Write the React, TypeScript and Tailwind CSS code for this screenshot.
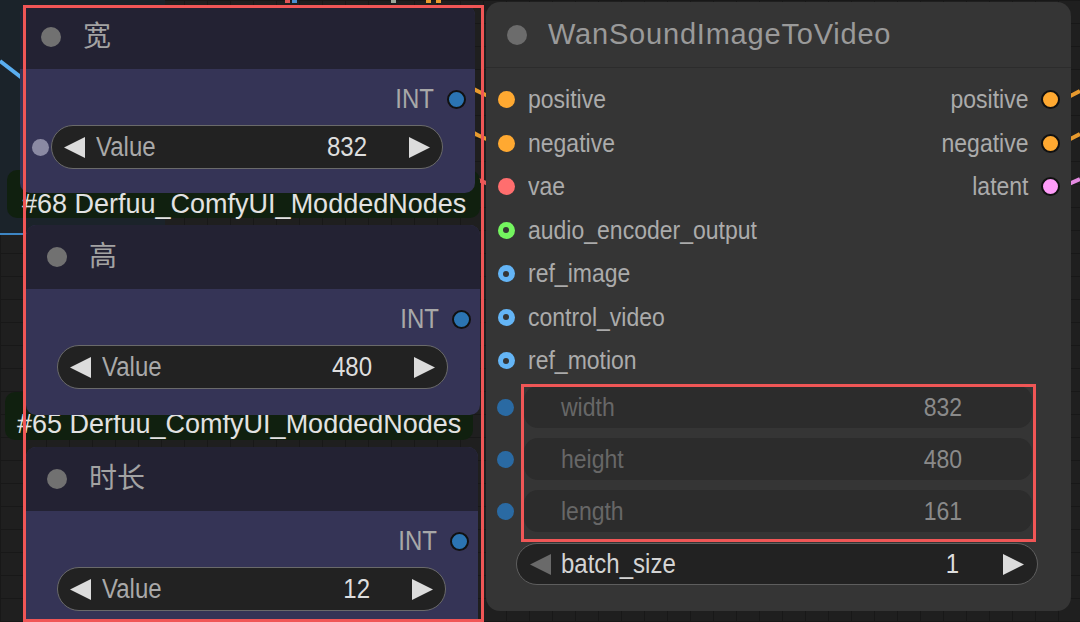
import React from 'react';

const FONT = "font-['Liberation_Sans','Noto_Sans_CJK_SC',sans-serif]";

// widget / slot text in the screenshot is drawn a bit taller than plain Arial
const TXT = 'leading-none scale-y-[1.15]';

const ArrowLeft = ({ color = '#dcdcdc' }: { color?: string }) => (
  <svg width="22" height="21" viewBox="0 0 22 21" className="shrink-0">
    <polygon points="21,0 21,21 0,10.5" fill={color} />
  </svg>
);

const ArrowRight = ({ color = '#dcdcdc' }: { color?: string }) => (
  <svg width="22" height="21" viewBox="0 0 22 21" className="shrink-0">
    <polygon points="1,0 1,21 22,10.5" fill={color} />
  </svg>
);

interface IntNodeProps {
  title: string;
  value: string;
  className: string;
  inputDot?: boolean;
}

// small "primitive int" node on the left side
const IntNode = ({ title, value, className, inputDot }: IntNodeProps) => (
  <div className={`absolute rounded-[10px] overflow-hidden bg-[#353456] ${className}`}>
    <div className="h-[64px] bg-[#232233] flex items-center pl-[21px]">
      <span className="w-[20px] h-[20px] rounded-full bg-[#717171]" />
      <span className="ml-[22px] text-[28px] leading-none text-[#a3a3a3]">{title}</span>
    </div>
    <div className="relative pt-[18px]">
      <div className="h-[24px] flex items-center justify-end pr-[9px]">
        <span className={`text-[24px] text-[#a8a8a8] ${TXT}`}>INT</span>
        <span className="ml-[13px] w-[19px] h-[19px] rounded-full bg-[#2b74b2] border-2 border-[#111]" />
      </div>
      <div className="relative mt-[14px] ml-[31px] mr-[32px] h-[44px] rounded-full bg-[#222222] border-[1.5px] border-[#6a6a6a] flex items-center px-[12px]">
        {inputDot && (
          <span className="absolute left-[-20px] top-[13px] w-[17px] h-[17px] rounded-full bg-[#8b8aa3]" />
        )}
        <ArrowLeft />
        <span className={`ml-[10px] text-[24px] text-[#a9a9a9] ${TXT}`}>Value</span>
        <span className={`ml-auto text-[24px] text-[#dedede] ${TXT}`}>{value}</span>
        <span className="ml-[41px]">
          <ArrowRight />
        </span>
      </div>
    </div>
  </div>
);

const GreenTag = ({ text, className }: { text: string; className: string }) => (
  <div className={`absolute h-[48px] rounded-[10px] bg-[#10200f] ${className}`}>
    <div className="text-[27px] leading-[28px] text-[#e2e2e2] whitespace-nowrap">{text}</div>
  </div>
);

type Dot = { color: string; ring?: boolean };

const InDot = ({ color, ring }: Dot) => (
  <span
    className="w-[17px] h-[17px] rounded-full flex items-center justify-center shrink-0"
    style={{ backgroundColor: color }}
  >
    {ring && <span className="w-[6px] h-[6px] rounded-full bg-[#353535]" />}
  </span>
);

const OutDot = ({ color }: { color: string }) => (
  <span
    className="w-[19px] h-[19px] rounded-full border-2 border-[#111] shrink-0"
    style={{ backgroundColor: color }}
  />
);

const rows: { name: string; dot: Dot; out?: string; outColor?: string }[] = [
  { name: 'positive', dot: { color: '#ffa931' }, out: 'positive', outColor: '#ffa931' },
  { name: 'negative', dot: { color: '#ffa931' }, out: 'negative', outColor: '#ffa931' },
  { name: 'vae', dot: { color: '#ff6e6e' }, out: 'latent', outColor: '#ff9cf9' },
  { name: 'audio_encoder_output', dot: { color: '#74f55f', ring: true } },
  { name: 'ref_image', dot: { color: '#64b5f6', ring: true } },
  { name: 'control_video', dot: { color: '#64b5f6', ring: true } },
  { name: 'ref_motion', dot: { color: '#64b5f6', ring: true } },
];

const widgets = [
  { name: 'width', value: '832' },
  { name: 'height', value: '480' },
  { name: 'length', value: '161' },
];

export default function App() {
  return (
    <div
      className={`relative w-[1080px] h-[622px] overflow-hidden bg-[#1f1f1f] bg-[linear-gradient(to_right,#181818_1px,transparent_1px),linear-gradient(to_bottom,#181818_1px,transparent_1px)] bg-[size:23px_23px] ${FONT}`}
    >
      {/* group area top-left */}
      <div className="absolute left-0 top-0 w-[165px] h-[235px] bg-[#1b232a] border-b-2 border-[#3d86c4]" />

      {/* links */}
      <svg className="absolute inset-0" width="1080" height="622">
        <path d="M0 61 L22 78" stroke="#5aaef0" strokeWidth="4" fill="none" />
        <path d="M466 86 C478 90 484 96 500 100" stroke="#e89a2e" strokeWidth="4" fill="none" />
        <path d="M466 130 C478 134 484 140 500 143" stroke="#e89a2e" strokeWidth="4" fill="none" />
        <path d="M466 176 C478 178 484 184 500 187" stroke="#e25c5c" strokeWidth="4" fill="none" />
        <path d="M1060 100 Q1070 97 1080 91" stroke="#e89a2e" strokeWidth="4" fill="none" />
        <path d="M1060 143 Q1070 140 1080 134" stroke="#e89a2e" strokeWidth="4" fill="none" />
        <path d="M1060 187 Q1070 184 1080 179" stroke="#e58ae2" strokeWidth="4" fill="none" />
        <rect x="285" y="0" width="5" height="3" fill="#e05555" />
        <rect x="292" y="0" width="5" height="3" fill="#4a8fd0" />
        <rect x="391" y="0" width="5" height="3" fill="#9aa79a" />
        <rect x="426" y="0" width="5" height="3" fill="#e89a2e" />
        <rect x="436" y="0" width="5" height="3" fill="#e89a2e" />
      </svg>

      {/* title tags of nodes hidden behind */}
      <GreenTag text="#68 Derfuu_ComfyUI_ModdedNodes" className="left-[7px] top-[170px] w-[473px] pt-[20px] pl-[15px]" />
      <GreenTag text="#65 Derfuu_ComfyUI_ModdedNodes" className="left-[5px] top-[392px] w-[468px] pt-[18px] pl-[12px]" />

      <IntNode title="宽" value="832" inputDot className="left-[20px] top-[5px] w-[455px] h-[188px]" />
      <IntNode title="高" value="480" className="left-[26px] top-[225px] w-[454px] h-[190px]" />
      <IntNode title="时长" value="12" className="left-[26px] top-[447px] w-[452px] h-[220px]" />

      {/* WanSoundImageToVideo node */}
      <div className="absolute left-[486px] top-[2px] w-[585px] h-[609px] rounded-[14px] bg-[#353535]">
        <div className="h-[66px] flex items-center pl-[21px] border-b border-[#2c2c2c]">
          <span className="w-[20px] h-[20px] rounded-full bg-[#6c6c6c]" />
          <span className="ml-[21px] text-[29px] tracking-[0.8px] leading-none text-[#9a9a9a]">
            WanSoundImageToVideo
          </span>
        </div>
        <div className="pt-[10px]">
          {rows.map((r) => (
            <div key={r.name} className="h-[43.5px] flex items-center pl-[11.5px] pr-[11.5px]">
              <InDot {...r.dot} />
              <span className={`ml-[13.5px] text-[23px] text-[#ababab] ${TXT}`}>{r.name}</span>
              {r.out && (
                <>
                  <span className={`ml-auto mr-[12px] text-[23px] text-[#ababab] ${TXT}`}>{r.out}</span>
                  <OutDot color={r.outColor!} />
                </>
              )}
            </div>
          ))}
        </div>
        <div className="mt-[3.5px] flex flex-col gap-[10px]">
          {widgets.map((w) => (
            <div key={w.name} className="flex items-center h-[42px]">
              <div className="w-[38px] flex items-center pl-[10.5px]">
                <span className="w-[17px] h-[17px] rounded-full bg-[#2a6aa3]" />
              </div>
              <div className="flex-1 mr-[39px] h-full rounded-[14px] bg-[#2c2c2c] flex items-center pl-[37px] pr-[70px]">
                <span className={`text-[23px] text-[#676767] ${TXT}`}>{w.name}</span>
                <span className={`ml-auto text-[23px] text-[#8a8a8a] ${TXT}`}>{w.value}</span>
              </div>
            </div>
          ))}
        </div>
        <div className="mt-[11px] ml-[30px] mr-[33px] h-[42px] rounded-full bg-[#222222] border-[1.5px] border-[#5e5e5e] flex items-center px-[13px]">
          <ArrowLeft color="#6a6a6a" />
          <span className={`ml-[9px] text-[24px] text-[#d4d4d4] ${TXT}`}>batch_size</span>
          <span className={`ml-auto text-[24px] text-[#dedede] ${TXT}`}>1</span>
          <span className="ml-[43px]">
            <ArrowRight />
          </span>
        </div>
      </div>

      {/* highlight boxes */}
      <div className="absolute left-[23px] top-[5px] w-[461px] h-[617px] border-[3px] border-[#f05656]" />
      <div className="absolute left-[521px] top-[384px] w-[515px] h-[158px] border-[3px] border-[#f05656]" />
    </div>
  );
}
